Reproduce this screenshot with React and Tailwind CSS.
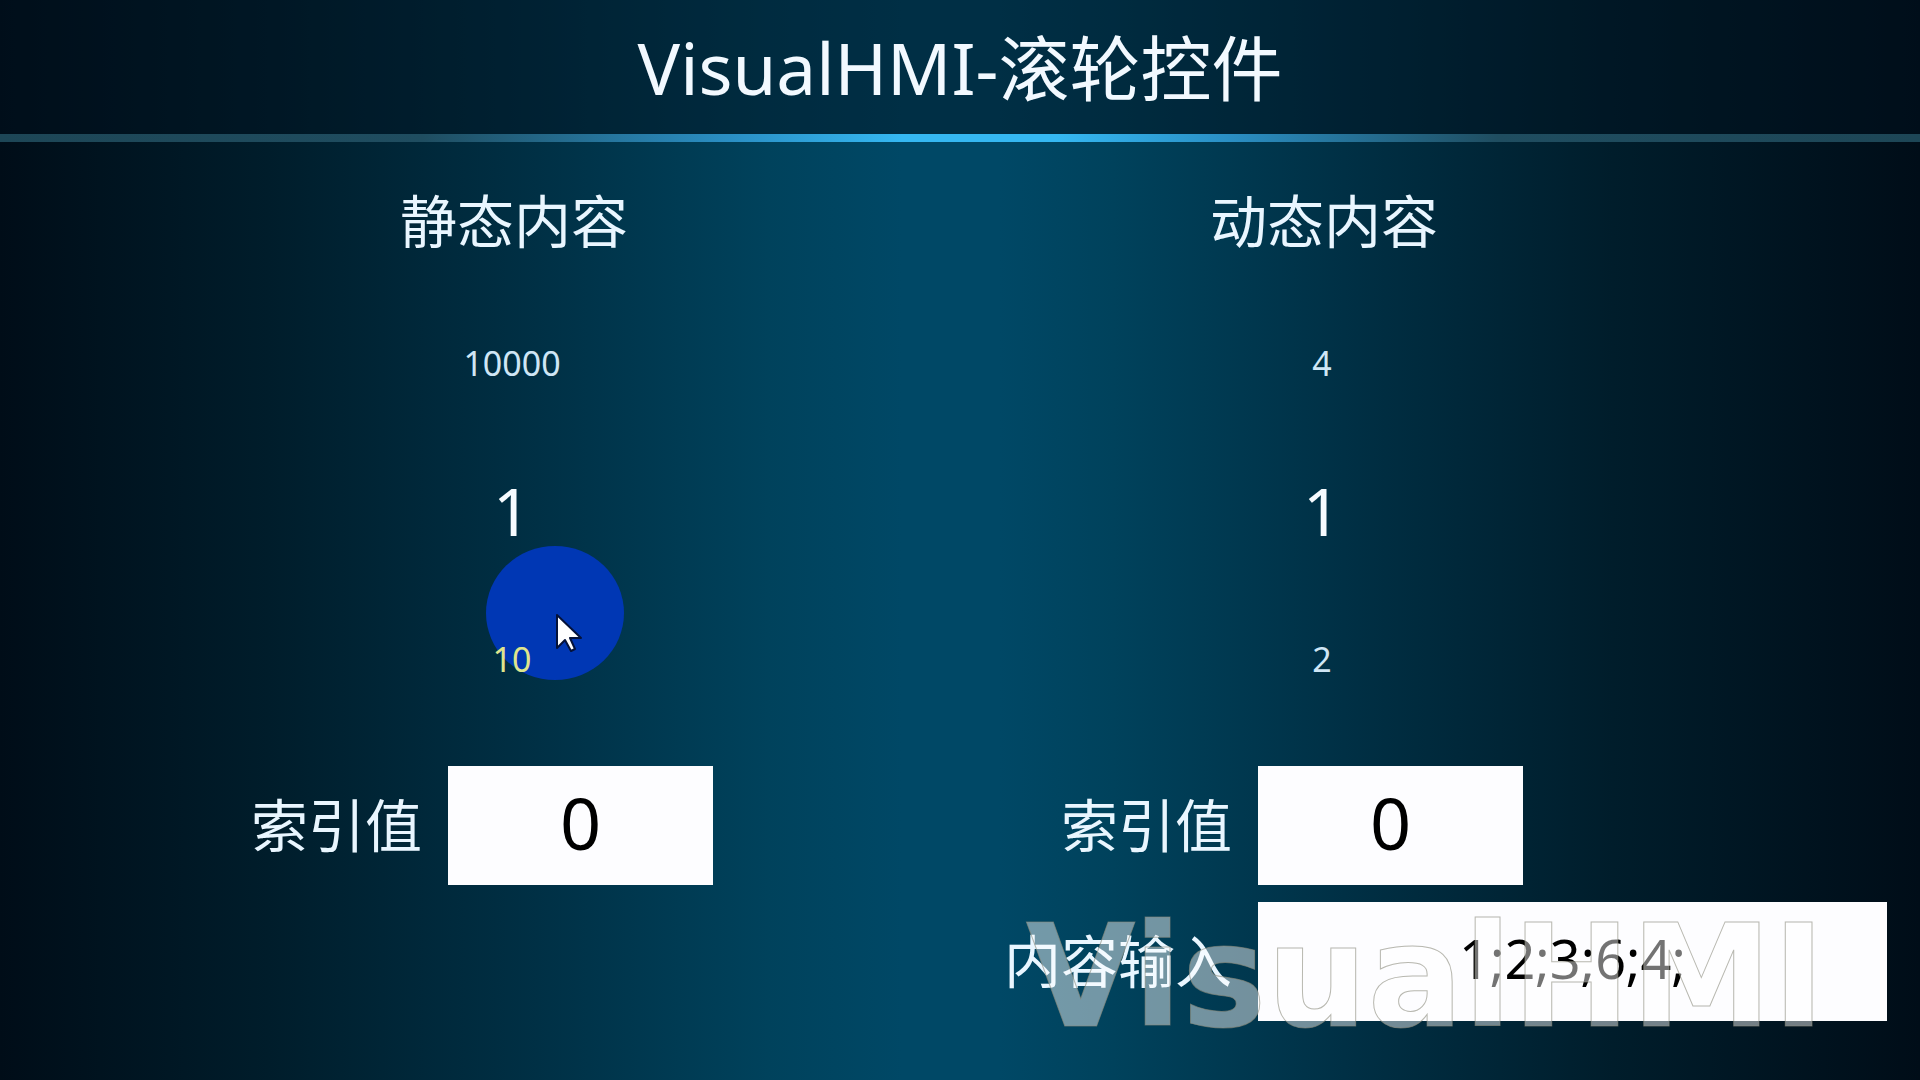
import { useState } from 'react';

const STATIC_ITEMS = ['1', '10', '100', '1000', '10000'];

function Touch() {
  return (
    <div className="pointer-events-none absolute left-1/2 top-[257px] ml-[-26px] flex h-[134px] w-[138px] rounded-[50%] bg-[#0037b4]" aria-hidden="true">
      <svg className="ml-[68px] mt-[66px]" width="32" height="46" viewBox="0 0 32 46">
        <path d="M3 3v33l8-8 6 11 4-2-5-11h11z" fill="#fff" stroke="#04123a" strokeWidth="2" strokeLinejoin="round" />
      </svg>
    </div>
  );
}

function Wheel({ label, items, value, onChange, touched }) {
  const count = items.length || 1;
  const index = Number(value) || 0;
  const at = (step) => (index + step + count) % count;

  return (
    <div className="relative mt-7">
      {touched && <Touch />}
      <ul aria-label={label} className="relative">
        {[-1, 0, 1].map((step) => (
          <li key={step} className="flex h-[148px] items-center justify-center">
            <button
              type="button"
              onClick={() => onChange(String(at(step)))}
              className={
                step === 0
                  ? 'pb-0.5 text-[66px] leading-none text-[#f6fbff]'
                  : touched && step === 1
                    ? 'text-[34px] leading-none text-[#dfe58c]'
                    : 'text-[34px] leading-none text-[#cfe6f5]'
              }
            >
              {items[at(step)]}
            </button>
          </li>
        ))}
      </ul>
    </div>
  );
}

function Field({ id, label, value, onChange, wide }) {
  return (
    <div className="flex items-center gap-[26px]">
      <label htmlFor={id} className="w-[312px] shrink-0 whitespace-nowrap text-right text-[57px] leading-none text-[#e9f6ff]">
        {label}
      </label>
      <input
        id={id}
        value={value}
        onChange={(e) => onChange(e.target.value)}
        className={
          wide
            ? 'h-[119px] w-full min-w-0 flex-1 bg-[#fdfdff] pb-2 text-center text-[54px] text-black outline-none'
            : 'h-[119px] w-[265px] bg-[#fdfdff] pb-2 text-center text-[72px] text-black outline-none'
        }
      />
    </div>
  );
}

export default function App() {
  const [staticIndex, setStaticIndex] = useState('0');
  const [dynamicIndex, setDynamicIndex] = useState('0');
  const [content, setContent] = useState('1;2;3;6;4;');

  return (
    <div className="relative min-h-screen overflow-hidden bg-[linear-gradient(90deg,#000d18_0%,#001d2b_14%,#003045_28%,#00425c_40%,#004866_47%,#004866_52%,#00425c_58%,#003045_70%,#001d2b_84%,#000d18_100%)] font-['Noto_Sans','Noto_Sans_CJK_SC',sans-serif]">
      <header className="flex h-[134px] items-center justify-center bg-[#00101c]/45">
        <h1 className="text-[71px] leading-none text-[#f2f9ff]">VisualHMI-滚轮控件</h1>
      </header>
      <div className="h-2 bg-[linear-gradient(90deg,#1d4656_0%,#1f4d60_22%,#2a8fc4_38%,#35b8f2_47%,#35b8f2_55%,#2a8fc4_64%,#1f4d60_78%,#1d4656_100%)]" />

      <main className="grid grid-cols-[810fr_967fr] pb-14 pl-[110px] pr-[33px] pt-[39px]">
        <section className="min-w-0">
          <div className="w-[804px] max-w-full">
            <h2 className="pl-1 text-center text-[57px] leading-[80px] text-[#e9f6ff]">静态内容</h2>
            <Wheel label="静态内容" items={STATIC_ITEMS} value={staticIndex} onChange={setStaticIndex} touched />
          </div>
          <div className="mt-[33px]">
            <Field id="static-index" label="索引值" value={staticIndex} onChange={setStaticIndex} />
          </div>
        </section>

        <section className="min-w-0">
          <div className="w-[804px] max-w-full">
            <h2 className="pl-1 text-center text-[57px] leading-[80px] text-[#e9f6ff]">动态内容</h2>
            <Wheel
              label="动态内容"
              items={content.split(';').filter(Boolean)}
              value={dynamicIndex}
              onChange={setDynamicIndex}
            />
          </div>
          <div className="mt-[33px] flex flex-col gap-[17px]">
            <Field id="dynamic-index" label="索引值" value={dynamicIndex} onChange={setDynamicIndex} />
            <Field id="content" label="内容输入" value={content} onChange={setContent} wide />
          </div>
        </section>
      </main>

      {/* watermark */}
      <div
        aria-hidden="true"
        className="pointer-events-none absolute bottom-[50px] right-[95px] font-['DejaVu_Sans',sans-serif] text-[142px] font-bold leading-[106px] text-white/45 [-webkit-text-stroke:1px_#8a8a7c99]"
      >
        VisualHMI
      </div>
    </div>
  );
}
